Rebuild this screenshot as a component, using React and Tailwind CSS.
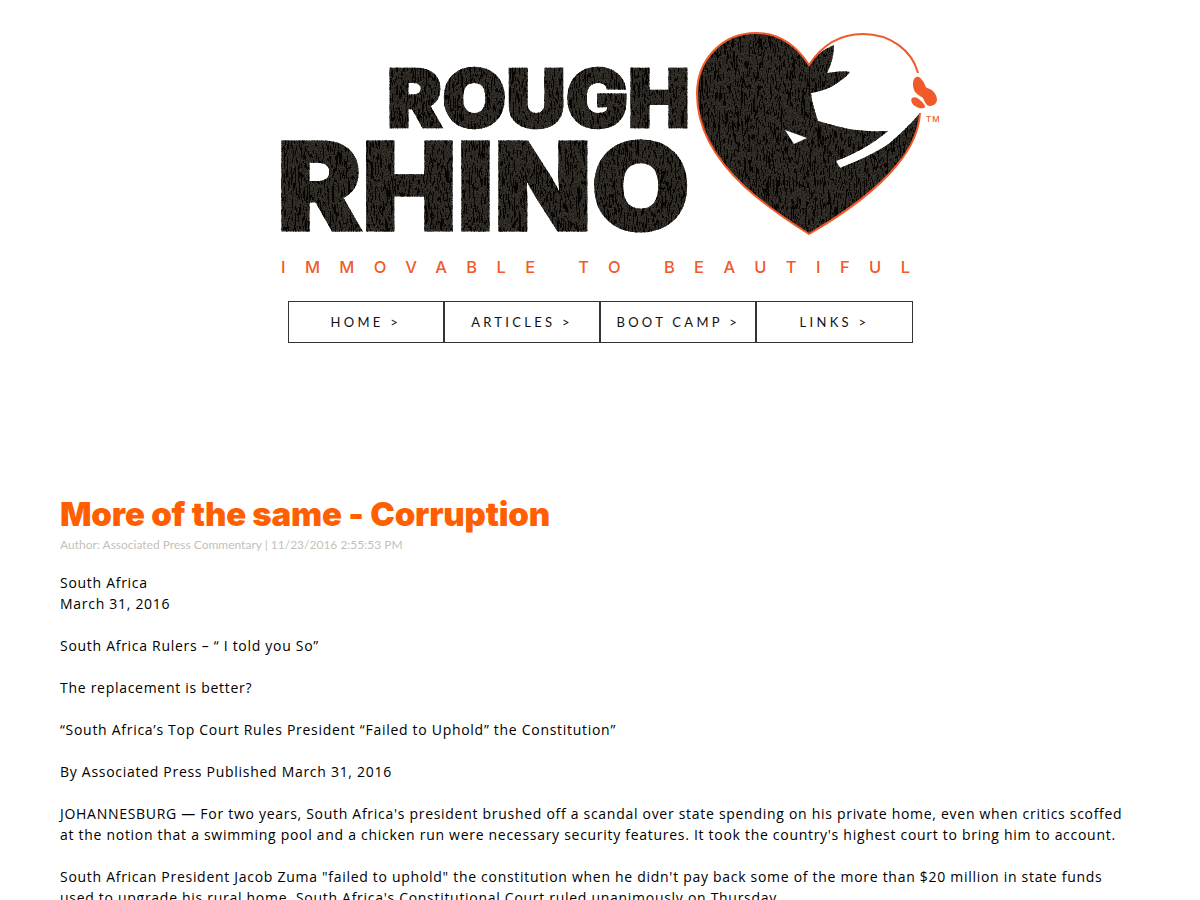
const navItems = ['HOME >', 'ARTICLES >', 'BOOT CAMP >', 'LINKS >'];

const lines = [
  ['South Africa', 'March 31, 2016'],
  ['South Africa Rulers – “ I told you So”'],
  ['The replacement is better?'],
  ['“South Africa’s Top Court Rules President “Failed to Uphold” the Constitution”'],
  ['By Associated Press Published March 31, 2016'],
  ["JOHANNESBURG — For two years, South Africa's president brushed off a scandal over state spending on his private home, even when critics scoffed at the notion that a swimming pool and a chicken run were necessary security features. It took the country's highest court to bring him to account."],
  ['South African President Jacob Zuma "failed to uphold" the constitution when he didn\'t pay back some of the more than $20 million in state funds used to upgrade his rural home, South Africa\'s Constitutional Court ruled unanimously on Thursday.'],
];

function Logo() {
  return (
    <svg viewBox="250 0 700 290" width="700" height="290" className="block mx-auto">
      <defs>
        <filter id="bark" x="0" y="0" width="100%" height="100%" colorInterpolationFilters="sRGB">
          {/* fine grain */}
          <feTurbulence type="fractalNoise" baseFrequency="0.7" numOctaves="2" seed="7" result="grain" />
          <feColorMatrix in="grain" type="matrix" values="0 0 0 0 0.13  0 0 0 0 0.11  0 0 0 0 0.09  0 0 0 -6 3.4" result="specks" />
          {/* long vertical cracks, a thin band of the noise */}
          <feTurbulence type="fractalNoise" baseFrequency="0.14 0.022" numOctaves="3" seed="11" result="n" />
          <feColorMatrix in="n" type="matrix" values="0 0 0 0 0.03  0 0 0 0 0.02  0 0 0 0 0.01  1 0 0 0 0" result="a" />
          <feComponentTransfer in="a" result="veins">
            <feFuncA type="discrete" tableValues="0 0 0 0 0 0 0 1 0 0 0 1 0 0 0 1 0 0 0 0 0 0" />
          </feComponentTransfer>
          <feComposite in="specks" in2="SourceAlpha" operator="in" result="s" />
          <feComposite in="veins" in2="SourceAlpha" operator="in" result="v" />
          <feMerge>
            <feMergeNode in="SourceGraphic" />
            <feMergeNode in="s" />
            <feMergeNode in="v" />
          </feMerge>
        </filter>
      </defs>

      <g filter="url(#bark)" fill="#36332f" stroke="#36332f" fontFamily="Inter, sans-serif" fontWeight="900">
        <text x="387" y="127" fontSize="80" strokeWidth="2.5" textLength="303" lengthAdjust="spacingAndGlyphs">ROUGH</text>
        <text x="277" y="230" fontSize="121" strokeWidth="3" textLength="413" lengthAdjust="spacingAndGlyphs">RHINO</text>
      </g>

      {/* heart, the white part is the rhino's face */}
      <path
        filter="url(#bark)"
        fill="#36332f"
        d="M809 65 C796 45 778 33 756 33 C722 33 697 60 697 94 C697 130 716 160 745 187 C765 205 790 222 809 234 C840 216 875 192 897 165 C912 147 919 130 920 113 C911 124 900 134 890 143 C875 153 858 161 840 168 L836 161 C852 155 872 145 888 131 C872 132 855 131 840 127 C832 125 825 123 818 121 C815 112 812 103 811 93 C822 91 831 88 837 83 C842 80 847 76 850 72 C842 71 835 72 827 73 C832 63 834 54 834 45 C822 50 815 56 809 65 Z"
      />
      <path fill="#fff" d="M785 130 L807 138 L794 144 Z" />
      <path
        fill="none"
        stroke="#f15a29"
        strokeWidth="2"
        d="M918 73 C912 50 890 34 863 34 C840 34 822 45 809 65 C796 45 778 33 756 33 C722 33 697 60 697 94 C697 130 716 160 745 187 C765 205 790 222 809 234 C840 216 875 192 897 165 C912 147 919 130 920 113"
      />
      {/* butterfly */}
      <g fill="#f15a29">
        <path d="M914 79 C917 75 920 77 922 80 C925 83 925 87 927 88 C931 89 936 92 937 99 C937 104 933 106 930 106 C926 106 925 102 923 98 C920 96 917 94 916 93 C913 90 912 83 914 79 Z" />
        <path d="M912 98 C915 96 918 98 920 100 C922 102 925 104 925 107 C924 109 921 108 919 108 C916 107 913 105 912 103 C911 101 911 99 912 98 Z" />
      </g>
      <text x="926" y="122" fontSize="8" fill="#f15a29" fontFamily="Inter, sans-serif" fontWeight="500" letterSpacing="1">TM</text>

      <text
        x="281"
        y="273"
        fontSize="16.500"
        fill="#f15a29"
        fontFamily="Inter, sans-serif"
        fontWeight="500"
        textLength="629"
        lengthAdjust="spacing"
        xmlSpace="preserve"
      >
        IMMOVABLE TO BEAUTIFUL
      </text>
    </svg>
  );
}

export default function App() {
  return (
    <div className="bg-white font-['Open_Sans',sans-serif] text-black">
      <header>
        <Logo />
        <nav className="flex justify-center mt-[11px] ml-[0.25px]">
          {navItems.map((item) => (
            <a
              key={item}
              className="flex items-center justify-center w-[156.25px] h-[42px] pt-[2px] border border-[#333] text-[13px] tracking-[3.3px] font-['Lato',sans-serif] text-[#111]"
            >
              {item}
            </a>
          ))}
        </nav>
      </header>

      <main className="pl-[60px] pr-[70px] mt-[148px]">
        <h1 className="font-['Inter',sans-serif] font-black text-[#ff5f00] text-[33px] tracking-[-0.18px] leading-[46px]">
          More of the same - Corruption
        </h1>
        <p className="font-['Lato',sans-serif] text-[12px] leading-[16px] text-[#c4bfba]">
          Author: Associated Press Commentary | 11/23/2016 2:55:53 PM
        </p>
        <div className="mt-[19px] text-[14px] leading-[21px] tracking-[0.71px]">
          {lines.map((para, i) => (
            <p key={i} className="mb-[21px]">
              {para.map((line, j) => (
                <span key={j} className="block">{line}</span>
              ))}
            </p>
          ))}
        </div>
      </main>
    </div>
  );
}
